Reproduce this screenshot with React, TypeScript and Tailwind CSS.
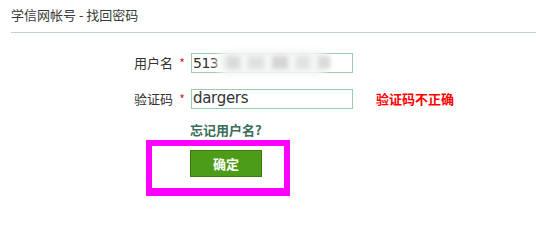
const cjk = { fontFamily: '"Noto Sans CJK SC", "Liberation Sans", sans-serif' };

export default function App() {
  return (
    <div className="w-[536px] h-[235px] bg-white overflow-hidden" style={cjk}>
      <div className="ml-[11px] h-[33px] border-b border-[#c3d2cb] pt-[6px] text-[13px] leading-[18px] text-[#3a3a3a]">
        学信网帐号 - 找回密码
      </div>

      <div className="mt-[20px] flex items-center h-[20px]">
        <div className="w-[173px] text-right text-[13px] text-[#333]">用户名</div>
        <div className="w-[18px] text-center text-[12px] text-[#e0202a]">*</div>
        <div className="relative w-[162px] h-[20px] border border-[#9ccdab] text-[14px] leading-[18px] pl-[1px] text-[#333] font-['DejaVu_Sans',sans-serif] tracking-[-0.5px]">
          513
          <div className="absolute left-[24px] top-[-4px] w-[112px] h-[26px] rounded-full bg-[#f4f7f5] blur-[3px]" />
          <div className="absolute left-[34px] top-[2px] flex gap-[8px] blur-[2px]">
            <div className="w-[14px] h-[13px] bg-[#dadada]" />
            <div className="w-[16px] h-[13px] bg-[#e0e0e0]" />
            <div className="w-[16px] h-[13px] bg-[#d6d6d6]" />
            <div className="w-[14px] h-[13px] bg-[#e2e2e2]" />
            <div className="w-[12px] h-[13px] bg-[#dadada]" />
          </div>
        </div>
      </div>

      <div className="mt-[16px] flex items-center h-[20px]">
        <div className="w-[173px] text-right text-[13px] text-[#333]">验证码</div>
        <div className="w-[18px] text-center text-[12px] text-[#e0202a]">*</div>
        <div className="w-[162px] h-[20px] border border-[#9ccdab] text-[15px] leading-[17px] pl-[1px] text-[#333] font-['DejaVu_Sans',sans-serif] tracking-[-0.3px]">
          dargers
        </div>
        <div className="ml-[23px] text-[13px] font-bold text-[#f00]">验证码不正确</div>
      </div>

      <div className="mt-[12px] ml-[190px] text-[13px] leading-[17px] font-bold text-[#3b6d58]">忘记用户名?</div>

      <div className="mt-[2px] ml-[146px] w-[144px] h-[56px] border-[6px] border-b-[8px] border-[#f0f] bg-white">
        <div className="ml-[38px] mt-[4px] w-[72px] h-[27px] border border-[#3a7d0c] bg-[#4d9c17] flex items-center justify-center text-[13px] font-bold text-white">
          确定
        </div>
      </div>
    </div>
  );
}
